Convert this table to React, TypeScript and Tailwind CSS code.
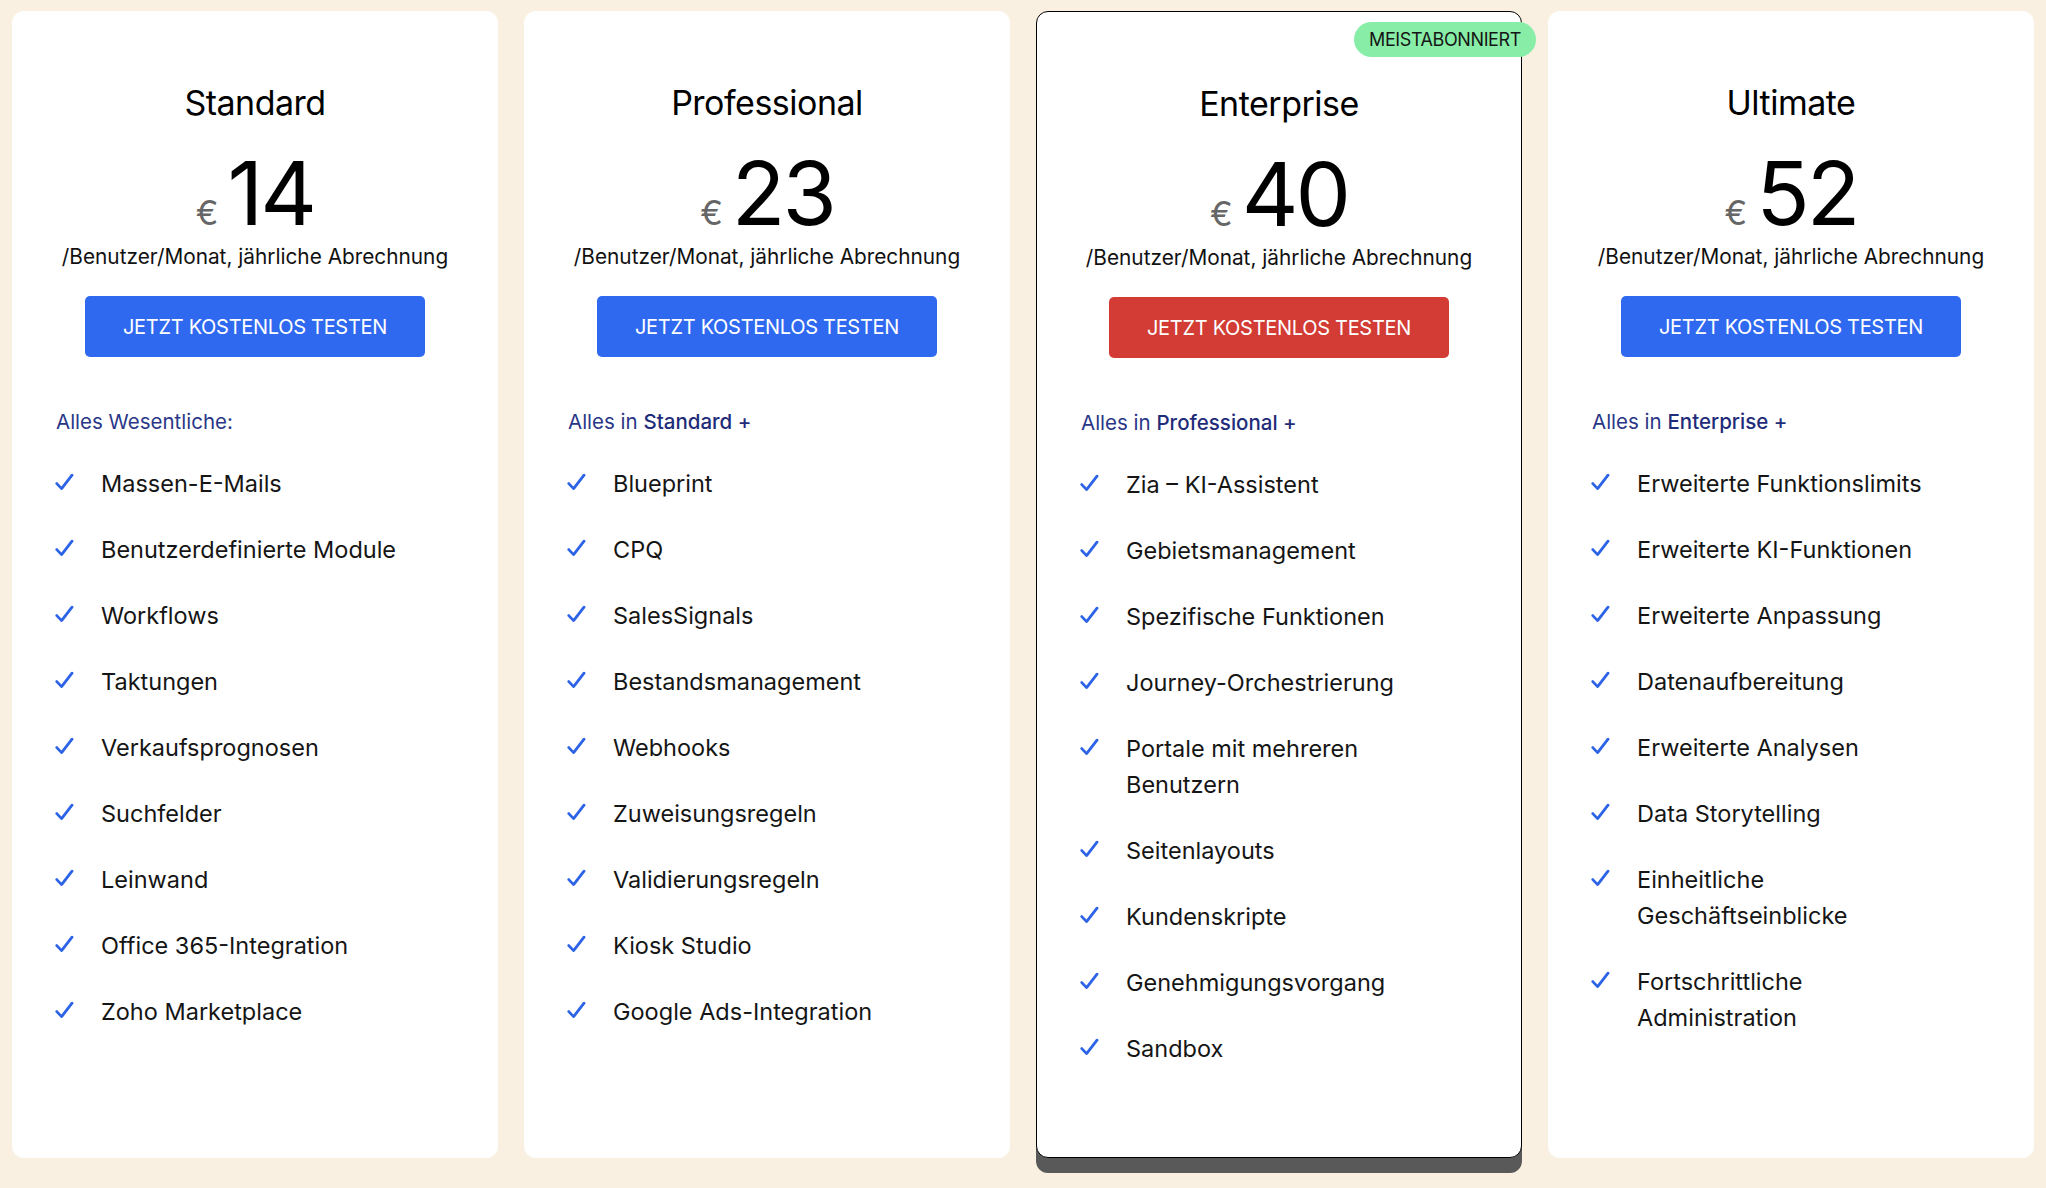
import React from "react";

type Plan = {
  name: string;
  price: string;
  lead: string;
  strong?: string;
  features: string[];
  featured?: boolean;
};

const plans: Plan[] = [
  {
    name: "Standard",
    price: "14",
    lead: "Alles Wesentliche:",
    features: [
      "Massen-E-Mails",
      "Benutzerdefinierte Module",
      "Workflows",
      "Taktungen",
      "Verkaufsprognosen",
      "Suchfelder",
      "Leinwand",
      "Office 365-Integration",
      "Zoho Marketplace",
    ],
  },
  {
    name: "Professional",
    price: "23",
    lead: "Alles in ",
    strong: "Standard +",
    features: [
      "Blueprint",
      "CPQ",
      "SalesSignals",
      "Bestandsmanagement",
      "Webhooks",
      "Zuweisungsregeln",
      "Validierungsregeln",
      "Kiosk Studio",
      "Google Ads-Integration",
    ],
  },
  {
    name: "Enterprise",
    price: "40",
    lead: "Alles in ",
    strong: "Professional +",
    featured: true,
    features: [
      "Zia – KI-Assistent",
      "Gebietsmanagement",
      "Spezifische Funktionen",
      "Journey-Orchestrierung",
      "Portale mit mehreren Benutzern",
      "Seitenlayouts",
      "Kundenskripte",
      "Genehmigungsvorgang",
      "Sandbox",
    ],
  },
  {
    name: "Ultimate",
    price: "52",
    lead: "Alles in ",
    strong: "Enterprise +",
    features: [
      "Erweiterte Funktionslimits",
      "Erweiterte KI-Funktionen",
      "Erweiterte Anpassung",
      "Datenaufbereitung",
      "Erweiterte Analysen",
      "Data Storytelling",
      "Einheitliche Geschäftseinblicke",
      "Fortschrittliche Administration",
    ],
  },
];

function Check() {
  return (
    <svg width="19" height="19" viewBox="0 0 19 19" className="shrink-0 mt-[7px] -ml-[1px]">
      <path
        d="M1.8 10.6 L6.6 15.6 L17 2.2"
        fill="none"
        stroke="#2d63e6"
        strokeWidth="2.8"
        strokeLinecap="round"
        strokeLinejoin="round"
      />
    </svg>
  );
}

function Card({ plan }: { plan: Plan }) {
  const base =
    "relative bg-white rounded-[12px] h-[1147px] flex flex-col items-center pt-[70px]";
  const featured = plan.featured
    ? " border border-black shadow-[0_15px_0_0_#595959]"
    : "";
  return (
    <div className={base + featured}>
      {plan.featured && (
        <div className="absolute top-[10px] right-[-15px] h-[35px] w-[182px] rounded-full bg-[#88eea7] flex items-center justify-center text-[18px] tracking-[-0.4px] text-[#151515]">
          MEISTABONNIERT
        </div>
      )}
      <h2 className="text-[34px] leading-[44px] tracking-[-0.5px] text-black font-normal">{plan.name}</h2>
      <div className="mt-[24px] flex items-baseline">
        <span className="text-[34px] leading-none text-[#666666] mr-[9px]">€</span>
        <span className="text-[88px] leading-[88px] text-black tracking-[-3px]">{plan.price}</span>
      </div>
      <p className="mt-[6px] text-[20.8px] leading-[28px] text-[#111111]">
        /Benutzer/Monat, jährliche Abrechnung
      </p>
      <button
        className={
          "mt-[25px] w-[340px] h-[61px] rounded-[5px] text-white text-[20px] tracking-[-0.3px] " +
          (plan.featured ? "bg-[#d23c35]" : "bg-[#2f69f0]")
        }
      >
        JETZT KOSTENLOS TESTEN
      </button>
      <div className="self-stretch pl-[44px] pr-[40px] mt-[51px]">
        <p className="text-[20.5px] leading-[28px] text-[#2a3788]">
          {plan.lead}
          {plan.strong && <span className="font-medium text-[#1f2c7a]">{plan.strong}</span>}
        </p>
        <ul className="mt-[30px] flex flex-col gap-[30px]">
          {plan.features.map((f) => (
            <li key={f} className="flex items-start">
              <div className="w-[45px] shrink-0">
                <Check />
              </div>
              <span className="text-[23.5px] leading-[36px] text-[#151515] max-w-[320px]">{f}</span>
            </li>
          ))}
        </ul>
      </div>
    </div>
  );
}

export default function App() {
  return (
    <div
      className="h-[1188px] bg-[#f9f0e2] px-[12px] pt-[11px] grid grid-cols-4 gap-[26px] items-start"
      style={{ fontFamily: "Inter, 'Noto Sans', sans-serif" }}
    >
      {plans.map((p) => (
        <Card key={p.name} plan={p} />
      ))}
    </div>
  );
}
